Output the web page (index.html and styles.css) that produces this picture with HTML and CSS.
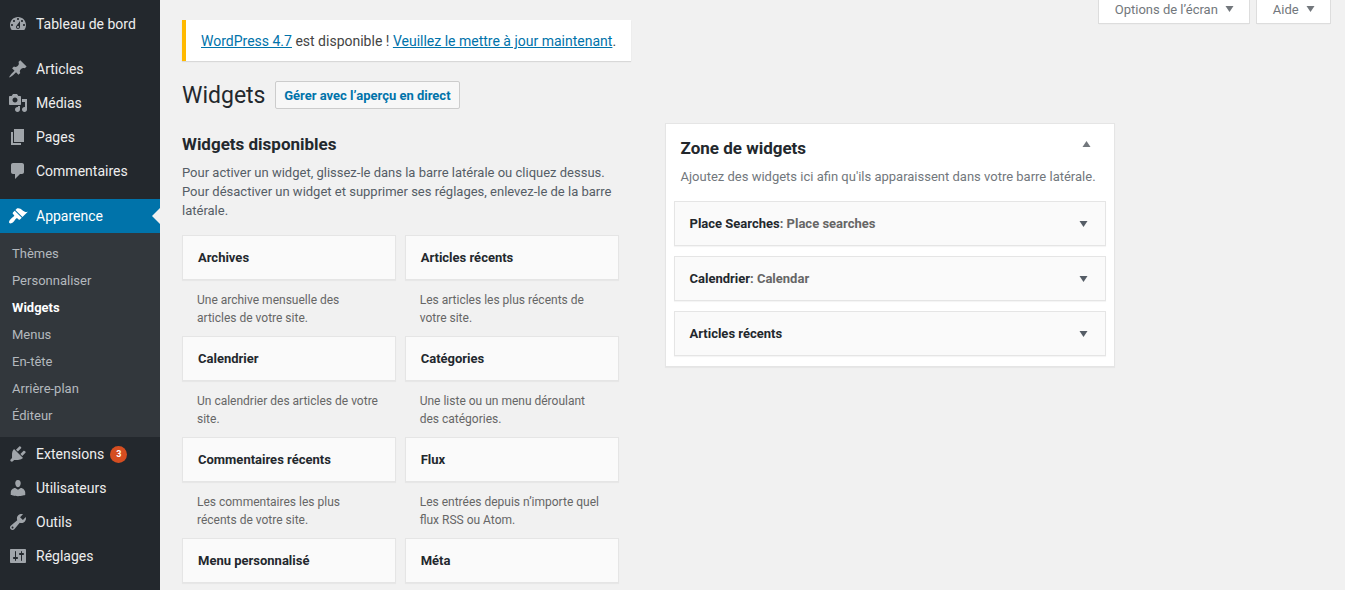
FILE: index.html
```html
<!DOCTYPE html>
<html lang="fr">
<head>
<meta charset="utf-8">
<title>Widgets</title>
<link rel="stylesheet" href="styles.css">
</head>
<body>
<div class="layout">
  <nav class="menu">
    <a class="item"><svg class="icon" viewBox="0 0 20 20"><path d="M3.76 16h12.48c1.1-1.37 1.76-3.11 1.76-5 0-4.42-3.58-8-8-8s-8 3.58-8 8c0 1.89.66 3.63 1.76 5zM10 4c.55 0 1 .45 1 1s-.45 1-1 1-1-.45-1-1 .45-1 1-1zM6 6c.55 0 1 .45 1 1s-.45 1-1 1-1-.45-1-1 .45-1 1-1zm8 0c.55 0 1 .45 1 1s-.45 1-1 1-1-.45-1-1 .45-1 1-1zm-5.37 5.55L12 7v6c0 1.1-.9 2-2 2s-2-.9-2-2c0-.57.24-1.08.63-1.45zM4 10c.55 0 1 .45 1 1s-.45 1-1 1-1-.45-1-1 .45-1 1-1zm12 0c.55 0 1 .45 1 1s-.45 1-1 1-1-.45-1-1 .45-1 1-1zm-5 3c0-.55-.45-1-1-1s-1 .45-1 1 .45 1 1 1 1-.45 1-1z"/></svg>Tableau de bord</a>
    <div class="separator"></div>
    <a class="item"><svg class="icon" viewBox="0 0 20 20"><path d="M10.44 3.02l1.82-1.82 6.36 6.35-1.83 1.82c-1.05-.68-2.48-.57-3.41.36l-.75.75c-.92.93-1.04 2.35-.35 3.41l-1.83 1.82-2.41-2.41-2.8 2.79c-.42.42-3.38 2.71-3.8 2.29s1.86-3.39 2.28-3.81l2.79-2.79L4.1 9.36l1.83-1.82c1.05.69 2.48.57 3.4-.36l.75-.75c.93-.92 1.05-2.35.36-3.41z"/></svg>Articles</a>
    <a class="item"><svg class="icon" viewBox="0 0 20 20"><path d="M13 11V4c0-.55-.45-1-1-1h-1.67L9 1H5L3.67 3H2c-.55 0-1 .45-1 1v7c0 .55.45 1 1 1h10c.55 0 1-.45 1-1zM7 4.5c1.38 0 2.5 1.12 2.5 2.5S8.38 9.5 7 9.5 4.5 8.38 4.5 7 5.62 4.5 7 4.5zM14 6h5v10.5c0 1.38-1.12 2.5-2.5 2.5S14 17.88 14 16.5s1.12-2.5 2.5-2.5c.17 0 .34.02.5.05V9h-3V6zm-4 8.05V13h2v3.5c0 1.38-1.12 2.5-2.5 2.5S7 17.88 7 16.5 8.12 14 9.5 14c.17 0 .34.02.5.05z"/></svg>Médias</a>
    <a class="item"><svg class="icon" viewBox="0 0 20 20"><path d="M6 15V2h10v13H6zm-1 1h8v2H3V5h2v11z"/></svg>Pages</a>
    <a class="item"><svg class="icon" viewBox="0 0 20 20"><path d="M5 2h9c1.1 0 2 .9 2 2v7c0 1.1-.9 2-2 2h-2l-5 5v-5H5c-1.1 0-2-.9-2-2V4c0-1.1.9-2 2-2z"/></svg>Commentaires</a>
    <div class="separator"></div>
    <a class="item current"><svg class="icon" viewBox="0 0 20 20"><path d="M14.48 11.06L7.41 3.99l1.5-1.5c.5-.56 2.3-.47 3.51.32 1.21.8 1.43 1.28 2.91 2.1 1.18.64 2.45 1.26 4.45.85zm-.71.71L6.7 4.7 4.93 6.47c-.39.39-.39 1.02 0 1.41l1.06 1.06c.39.39.39 1.03 0 1.42-.6.6-1.43 1.11-2.21 1.69-.35.26-.7.53-1.01.84C1.43 14.23.4 16.08 1.4 17.07c.99 1 2.84-.03 4.18-1.36.31-.31.58-.66.85-1.02.57-.78 1.08-1.61 1.69-2.21.39-.39 1.02-.39 1.41 0l1.06 1.06c.39.39 1.02.39 1.41 0z"/></svg>Apparence</a>
    <div class="submenu">
      <a>Thèmes</a>
      <a>Personnaliser</a>
      <a class="active">Widgets</a>
      <a>Menus</a>
      <a>En-tête</a>
      <a>Arrière-plan</a>
      <a>Éditeur</a>
    </div>
    <a class="item"><svg class="icon" viewBox="0 0 20 20"><path d="M13.11 4.36L9.87 7.6 8 5.73l3.24-3.24c.35-.34 1.05-.2 1.56.32.52.51.66 1.21.31 1.55zm-8 1.77l.91-1.12 9.01 9.01-1.19.84c-.71.71-2.63 1.16-3.82 1.16H6.14L4.9 17.26c-.59.59-1.54.59-2.12 0-.59-.58-.59-1.53 0-2.12l1.24-1.24v-3.88c0-1.13.4-3.19 1.09-3.89zm7.26 3.97l3.24-3.24c.34-.35 1.04-.21 1.55.31.52.51.66 1.21.31 1.55l-3.24 3.25z"/></svg>Extensions<span class="count">3</span></a>
    <a class="item"><svg class="icon" viewBox="0 0 20 20"><path d="M10 9.25c-2.27 0-2.73-3.44-2.73-3.44C7 4.02 7.82 2 9.97 2c2.16 0 2.98 2.02 2.71 3.81 0 0-.41 3.44-2.68 3.44zm0 2.57L12.72 10c2.39 0 4.52 2.33 4.52 4.53v2.49s-3.65 1.13-7.24 1.13c-3.65 0-7.24-1.13-7.24-1.13v-2.49c0-2.25 1.94-4.48 4.47-4.48z"/></svg>Utilisateurs</a>
    <a class="item"><svg class="icon" viewBox="0 0 20 20"><path d="M16.68 9.77c-1.34 1.34-3.3 1.67-4.95.99l-5.41 6.52c-.99.99-2.59.99-3.58 0s-.99-2.59 0-3.57l6.52-5.42c-.68-1.65-.35-3.61.99-4.95 1.28-1.28 3.12-1.62 4.72-1.06l-2.89 2.89 2.82 2.82 2.86-2.87c.53 1.58.18 3.39-1.08 4.65zM3.81 16.21c.4.39 1.04.39 1.43 0 .4-.4.4-1.04 0-1.43-.39-.4-1.03-.4-1.43 0-.39.39-.39 1.03 0 1.43z"/></svg>Outils</a>
    <a class="item"><svg class="icon" viewBox="0 0 20 20"><path d="M18 16V4c0-.55-.45-1-1-1H3c-.55 0-1 .45-1 1v12c0 .55.45 1 1 1h14c.55 0 1-.45 1-1zM8 11h1c.55 0 1 .45 1 1s-.45 1-1 1H8v1.5c0 .28-.22.5-.5.5s-.5-.22-.5-.5V13H6c-.55 0-1-.45-1-1s.45-1 1-1h1V5.500c0-.28.22-.5.5-.5s.5.22.5.5V11zm5-2h-1c-.55 0-1-.45-1-1s.45-1 1-1h1V5.500c0-.28.22-.5.5-.5s.5.22.5.5V7h1c.55 0 1 .45 1 1s-.45 1-1 1h-1v5.500c0 .28-.22.5-.5.5s-.5-.22-.5-.5V9z"/></svg>Réglages</a>
  </nav>

  <main class="content">
    <section class="available">
      <div class="notice"><a>WordPress 4.7</a> est disponible ! <a>Veuillez le mettre à jour maintenant</a>.</div>
      <div class="heading">
        <h1>Widgets</h1>
        <a class="action">Gérer avec l’aperçu en direct</a>
      </div>
      <h2>Widgets disponibles</h2>
      <p class="intro">Pour activer un widget, glissez-le dans la barre latérale ou cliquez dessus. Pour désactiver un widget et supprimer ses réglages, enlevez-le de la barre latérale.</p>
      <div class="grid">
        <div class="cell"><h3 class="widget">Archives</h3><p>Une archive mensuelle des articles de votre site.</p></div>
        <div class="cell"><h3 class="widget">Articles récents</h3><p>Les articles les plus récents de votre site.</p></div>
        <div class="cell"><h3 class="widget">Calendrier</h3><p>Un calendrier des articles de votre site.</p></div>
        <div class="cell"><h3 class="widget">Catégories</h3><p>Une liste ou un menu déroulant des catégories.</p></div>
        <div class="cell"><h3 class="widget">Commentaires récents</h3><p>Les commentaires les plus récents de votre site.</p></div>
        <div class="cell"><h3 class="widget">Flux</h3><p>Les entrées depuis n’importe quel flux RSS ou Atom.</p></div>
        <div class="cell"><h3 class="widget">Menu personnalisé</h3></div>
        <div class="cell"><h3 class="widget">Méta</h3></div>
      </div>
    </section>

    <section class="side">
      <div class="tabs">
        <a class="tab">Options de l’écran<svg class="caret" viewBox="0 0 8 6"><path d="M0 0h8L4 6z"/></svg></a>
        <a class="tab">Aide<svg class="caret" viewBox="0 0 8 6"><path d="M0 0h8L4 6z"/></svg></a>
      </div>
      <div class="zone">
        <div class="zone-head">
          <h2>Zone de widgets</h2>
          <svg class="toggle" viewBox="0 0 8 6"><path d="M0 6h8L4 0z"/></svg>
        </div>
        <p class="zone-text">Ajoutez des widgets ici afin qu'ils apparaissent dans votre barre latérale.</p>
        <div class="zone-list">
          <h3 class="widget"><span>Place Searches<span class="sub">: Place searches</span></span><svg class="toggle" viewBox="0 0 8 6"><path d="M0 0h8L4 6z"/></svg></h3>
          <h3 class="widget"><span>Calendrier<span class="sub">: Calendar</span></span><svg class="toggle" viewBox="0 0 8 6"><path d="M0 0h8L4 6z"/></svg></h3>
          <h3 class="widget"><span>Articles récents</span><svg class="toggle" viewBox="0 0 8 6"><path d="M0 0h8L4 6z"/></svg></h3>
        </div>
      </div>
    </section>
  </main>
</div>
</body>
</html>
```
FILE: styles.css
```css
* { box-sizing: border-box; }
html, body { height: 100%; }
body {
  margin: 0;
  overflow: hidden;
  background: #f1f1f1;
  color: #444;
  font: 13px/19px Roboto, "Liberation Sans", sans-serif;
}
h1, h2, h3, p { margin: 0; }
h2 { color: #23282d; font-size: 17px; line-height: 24px; font-weight: 700; }

.layout { display: flex; height: 590px; }

.menu {
  flex: none;
  width: 160px;
  padding-top: 7px;
  background: #23282d;
}
.item {
  position: relative;
  display: flex;
  align-items: center;
  height: 34px;
  padding-left: 8px;
  color: #eee;
  font-size: 14px;
}
.icon { flex: none; width: 20px; height: 20px; margin-right: 8px; fill: #a0a5aa; }
.separator { height: 11px; }
.current { background: #0073aa; color: #fff; }
.current .icon { fill: #fff; }
.current::after {
  content: "";
  position: absolute;
  top: 9px;
  right: 0;
  border: 8px solid transparent;
  border-left: 0;
  border-right-color: #f1f1f1;
}
.submenu {
  display: flex;
  flex-direction: column;
  height: 204px;
  padding: 7px 12px 8px;
  background: #32373c;
  color: #b4b9be;
  line-height: 27px;
}
.submenu .active { color: #fff; font-weight: 700; }
.count {
  width: 17px;
  height: 17px;
  margin-left: 6px;
  border-radius: 9px;
  background: #d54e21;
  color: #fff;
  font-size: 9px;
  font-weight: 700;
  line-height: 17px;
  text-align: center;
}

.content { display: flex; flex: 1; padding: 0 14px 0 22px; }
.available { flex: none; width: 449px; padding-top: 20px; }
.notice {
  height: 41px;
  padding-left: 15px;
  border-left: 4px solid #ffb900;
  background: #fff;
  box-shadow: 0 1px 1px rgba(0, 0, 0, .1);
  font-size: 14px;
  line-height: 42px;
  white-space: nowrap;
}
.notice a { color: #0073aa; text-decoration: underline; }
.heading { display: flex; gap: 10px; align-items: center; height: 28px; margin-top: 20px; }
h1 { padding-top: 2px; color: #23282d; font-size: 23px; font-weight: 400; line-height: 28px; }
.action {
  height: 28px;
  padding: 0 8.3px 0 7.7px;
  border: 1px solid #ccc;
  border-radius: 2px;
  background: #f7f7f7;
  color: #0073aa;
  font-weight: 700;
  line-height: 27px;
}
.available h2 { margin-top: 23px; }
.intro { width: 437px; margin-top: 7px; color: #555d66; }
.grid {
  display: grid;
  grid-template-columns: 214px 214px;
  grid-template-rows: repeat(3, 101px) 45px;
  column-gap: 9px;
  margin-top: 15px;
}
.widget {
  display: flex;
  justify-content: space-between;
  height: 45px;
  padding: 0 15px;
  border: 1px solid #e5e5e5;
  background: #fafafa;
  box-shadow: 0 1px 1px rgba(0, 0, 0, .04);
  color: #23282d;
  font-size: 13px;
  font-weight: 700;
  line-height: 43px;
}
.cell:nth-child(even) .widget { padding-left: 14.7px; }
.cell p { padding: 11px 15px 0; color: #666; font-size: 12px; line-height: 18px; }
.cell:nth-child(even) p { padding-left: 14.7px; }

.side { flex: 1; padding-left: 34px; }
.tabs { display: flex; justify-content: flex-end; gap: 6px; height: 24px; margin-bottom: 99px; }
.tab {
  display: flex;
  align-items: flex-start;
  padding: 0 15.3px 0 15.7px;
  border: 1px solid #ddd;
  border-top: 0;
  background: #fff;
  box-shadow: 0 1px 1px -1px rgba(0, 0, 0, .1);
  color: #72777c;
}
.caret { width: 9px; height: 6px; margin: 6px 0 0 7px; fill: #72777c; }
.zone {
  width: 450px;
  height: 244px;
  padding: 0 8px;
  border: 1px solid #e5e5e5;
  background: #fff;
  box-shadow: 0 1px 1px rgba(0, 0, 0, .04);
}
.zone-head { display: flex; justify-content: space-between; padding: 12px 15px 0 6.5px; }
.zone-text { margin-top: 7px; padding-left: 6.5px; color: #72777c; white-space: nowrap; }
.toggle { width: 9px; height: 6px; fill: #555d66; }
.zone-head .toggle { margin-top: 5px; fill: #72777c; }
.zone-list { display: flex; flex-direction: column; gap: 10px; margin-top: 15px; }
.zone-list .widget { padding-left: 14.5px; padding-right: 17px; }
.zone-list .toggle { margin-top: 19px; }
.sub { color: #666; }
```
